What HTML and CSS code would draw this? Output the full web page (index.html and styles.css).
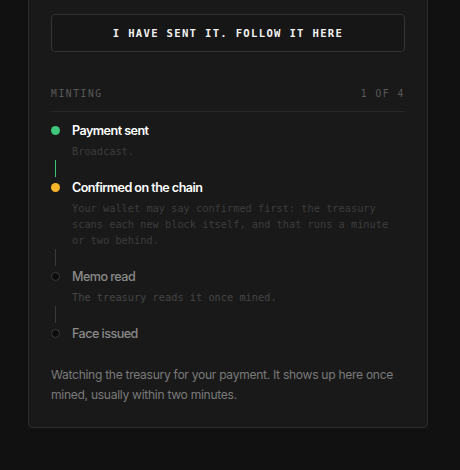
FILE: index.html
```html
<!DOCTYPE html>
<html>
<head>
<meta charset="utf-8">
<link rel="stylesheet" href="styles.css">
</head>
<body>
<div class="card">
  <button class="follow">I HAVE SENT IT. FOLLOW IT HERE</button>
  <div class="head">
    <span>MINTING</span>
    <span>1 OF 4</span>
  </div>
  <div class="steps">
    <div class="step done">
      <div class="row"><span class="dot"></span><span class="title">Payment sent</span></div>
      <div class="desc">Broadcast.</div>
    </div>
    <div class="conn green"></div>
    <div class="step active">
      <div class="row"><span class="dot"></span><span class="title">Confirmed on the chain</span></div>
      <div class="desc">Your wallet may say confirmed first: the treasury scans each new block itself, and that runs a minute or two behind.</div>
    </div>
    <div class="conn"></div>
    <div class="step pending">
      <div class="row"><span class="dot"></span><span class="title">Memo read</span></div>
      <div class="desc">The treasury reads it once mined.</div>
    </div>
    <div class="conn"></div>
    <div class="step pending">
      <div class="row"><span class="dot"></span><span class="title">Face issued</span></div>
    </div>
  </div>
  <p class="note">Watching the treasury for your payment. It shows up here once mined, usually within two minutes.</p>
</div>
</body>
</html>
```
FILE: styles.css
```css
html, body {
  margin: 0;
  padding: 0;
  background: #111111;
}
body {
  font-family: Inter, "Noto Sans", sans-serif;
  width: 460px;
  height: 470px;
  overflow: hidden;
}
.card {
  box-sizing: border-box;
  width: 400px;
  margin: -10px 0 0 28px;
  padding: 23px 22px 22px 22px;
  background: #191919;
  border: 1px solid #2c2c2c;
  border-radius: 4px;
}
.follow {
  display: block;
  box-sizing: border-box;
  width: 100%;
  height: 38px;
  background: #161616;
  border: 1px solid #333333;
  border-radius: 4px;
  color: #f2f2f2;
  font-family: "DejaVu Sans Mono", monospace;
  font-weight: bold;
  font-size: 10.6px;
  letter-spacing: 1.3px;
  padding: 0;
}
.head {
  display: flex;
  justify-content: space-between;
  margin-top: 35px;
  padding-bottom: 10px;
  border-bottom: 1px solid #262626;
  font-family: "DejaVu Sans Mono", monospace;
  font-size: 9.6px;
  letter-spacing: 1.6px;
  color: #5a5a5a;
  line-height: 14px;
}
.steps {
  margin-top: 9px;
}
.row {
  display: flex;
  align-items: center;
  height: 18px;
}
.dot {
  box-sizing: border-box;
  width: 9px;
  height: 9px;
  border-radius: 50%;
  margin-right: 12px;
  flex: none;
}
.done .dot { background: #3ec77a; }
.active .dot { background: #f5b42a; }
.pending .dot { background: #0c0c0c; border: 1px solid #3a3a3a; }
.title {
  font-size: 12.6px;
  font-weight: 600;
  letter-spacing: -0.55px;
  color: #ffffff;
}
.pending .title {
  color: #8a8a8a;
  font-weight: 500;
}
.desc {
  margin: 4px 0 0 21px;
  font-family: "DejaVu Sans Mono", monospace;
  font-size: 10.3px;
  line-height: 16px;
  color: #3d3d3d;
  padding-right: 10px;
}
.pending .desc { color: #454545; }
.conn {
  width: 1px;
  height: 17px;
  margin: 1px 0 1px 4px;
  background: #3a3a3a;
}
.conn.green { background: #3ec77a; }
.note {
  margin: 23px 0 0 0;
  font-size: 12.1px;
  line-height: 20px;
  color: #7a7a7a;
  letter-spacing: -0.3px;
}
```
